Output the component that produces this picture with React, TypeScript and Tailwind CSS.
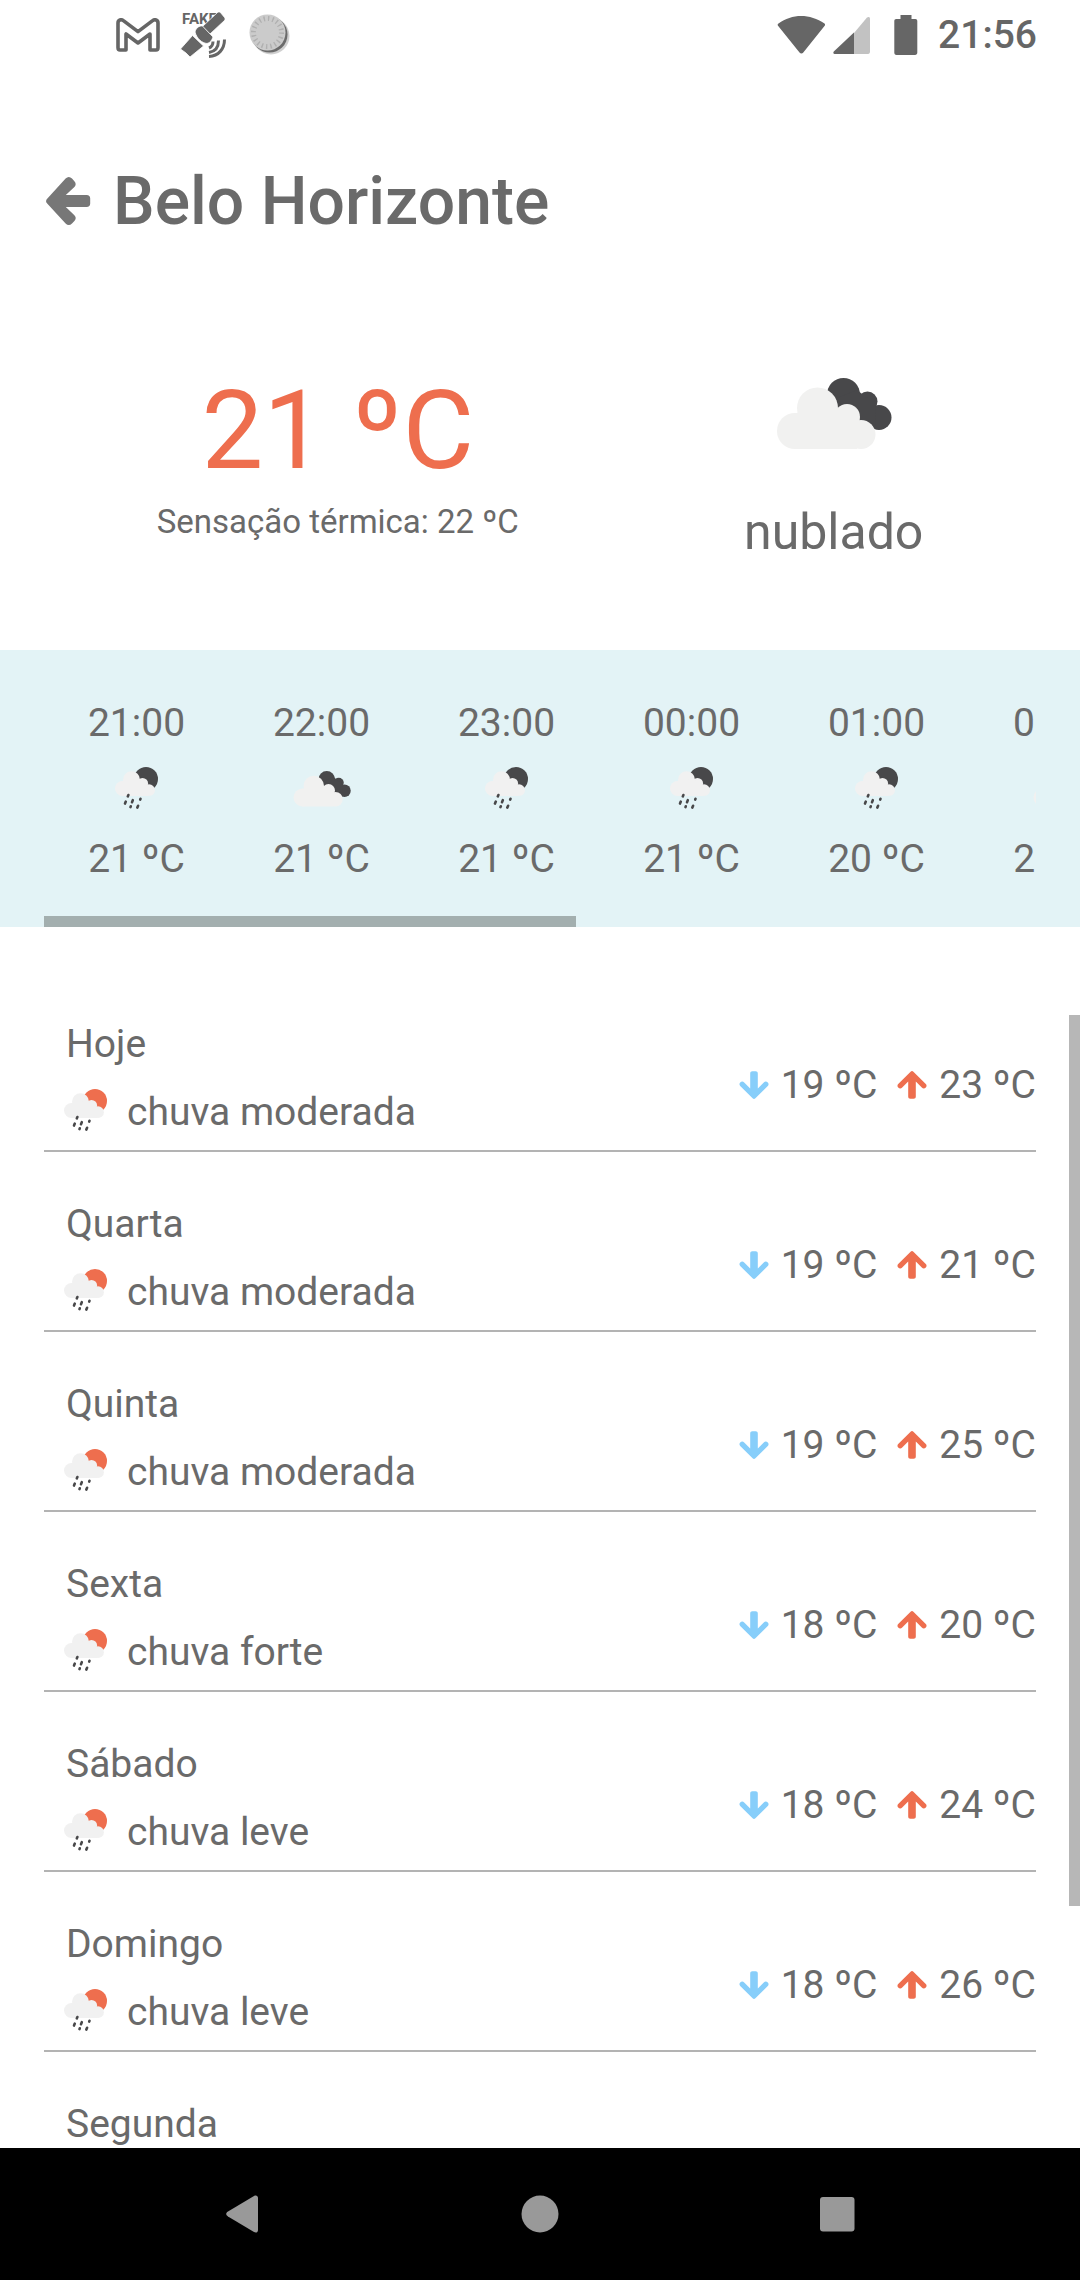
import React from "react";

type Sky = "rain" | "clouds";

const hours: { time: string; sky: Sky; temp: number }[] = [
  { time: "21:00", sky: "rain", temp: 21 },
  { time: "22:00", sky: "clouds", temp: 21 },
  { time: "23:00", sky: "rain", temp: 21 },
  { time: "00:00", sky: "rain", temp: 21 },
  { time: "01:00", sky: "rain", temp: 20 },
  { time: "02:00", sky: "clouds", temp: 20 },
];

const days = [
  { name: "Hoje", text: "chuva moderada", min: 19, max: 23 },
  { name: "Quarta", text: "chuva moderada", min: 19, max: 21 },
  { name: "Quinta", text: "chuva moderada", min: 19, max: 25 },
  { name: "Sexta", text: "chuva forte", min: 18, max: 20 },
  { name: "Sábado", text: "chuva leve", min: 18, max: 24 },
  { name: "Domingo", text: "chuva leve", min: 18, max: 26 },
  { name: "Segunda", text: "chuva leve", min: 18, max: 26 },
];

function CloudsIcon({ className }: { className: string }) {
  return (
    <svg viewBox="-1 0 116 72" className={className} aria-hidden="true">
      <g fill="#48484a">
        <circle cx="66.5" cy="16.5" r="16.5" />
        <circle cx="90.5" cy="23.5" r="10" />
        <circle cx="102" cy="39.5" r="12.5" />
        <path d="M60 20L80 12L99 27L98 51L84 50Z" />
      </g>
      <g fill="#f1f1f0">
        <circle cx="18" cy="53" r="18" />
        <circle cx="40.5" cy="30" r="20.5" />
        <circle cx="70" cy="39" r="13" />
        <circle cx="84" cy="56.5" r="14.5" />
        <path d="M18 36L22 34L60 30L80 44V71H18Z" />
      </g>
    </svg>
  );
}

function RainIcon({ disc }: { disc: string }) {
  return (
    <svg viewBox="0 0 44 44" className="h-11 w-11 shrink-0" aria-hidden="true">
      <circle cx="31" cy="12" r="12" fill={disc} />
      <g fill="#f1f1f1">
        <circle cx="7.5" cy="21.5" r="7.5" />
        <circle cx="16.5" cy="12.8" r="8.5" />
        <circle cx="27.5" cy="16.5" r="5.6" />
        <circle cx="34" cy="23.2" r="5.9" />
        <path d="M7.5 14L24 12L33 20V29H7.5Z" />
      </g>
      <g stroke="#48484a" strokeWidth="2.6" strokeLinecap="round">
        <path d="M13.4 28L12.8 29.4M10.8 34.6L10 36.6M17.8 33.2L17 35.2M25.5 31.8L25.2 32.6M15.8 39.3L15.5 40.1M23.1 38.8L22.3 40.6" />
      </g>
    </svg>
  );
}

function ArrowIcon({ className }: { className: string }) {
  return (
    <svg viewBox="0 0 30 28" className={className} aria-hidden="true">
      <path
        fill="currentColor"
        d="M13.6 0.7C14.4-.2 15.6-.2 16.4.7L28.8 13C30 14.2 29.6 15.6 28.8 16.4C27.6 17.7 26 17.7 24.8 16.5L18.8 10.6V25.6C18.8 27 18 27.8 16.6 27.8H13.4C12 27.8 11.2 27 11.2 25.6V10.6L5.2 16.5C4 17.7 2.4 17.7 1.2 16.4C.2 15.4.2 14 1.2 13Z"
      />
    </svg>
  );
}

function StatusBar() {
  return (
    <header className="flex h-[66px] shrink-0 items-center justify-between pl-[116px] pr-[43px] pt-[3px] text-[#666666]">
      <div className="flex items-center gap-5">
        <svg viewBox="0 0 44 34" className="h-[34px] w-11" aria-label="Gmail">
          <path
            d="M2 29.5V5C2 1.6 5.4 1 7.4 2.6L22 13.6L36.6 2.6C38.6 1 42 1.6 42 5V29.5C42 31 41.4 32 40 32H34V16L22 25L10 16V32H4C2.6 32 2 31 2 29.5Z"
            fill="none"
            stroke="currentColor"
            strokeWidth="3.6"
            strokeLinejoin="round"
          />
        </svg>
        <svg viewBox="0 0 48 46" className="h-[46px] w-12 overflow-visible" aria-label="Fake GPS">
          <text x="2" y="12" fontSize="15" fontWeight="700" fontFamily="Roboto, sans-serif" fill="currentColor">
            FAKE
          </text>
          <g fill="currentColor" stroke="#fff" strokeWidth="0.8">
            <path d="M38 0H40L45 6V8L30 22L22.5 14.5Z" />
            <path d="M15 20C16 16 19 13.5 22.5 14L33 25C32 28 30 31 27 31.5C22 31 17 27 15 20Z" />
            <path d="M12.5 23.5L23.5 34L10 45L6 41L.5 37Z" />
          </g>
          <path
            d="M29 36C31.5 35 33 33 33 29.5M29 40.5C35 39.5 38.5 35 38.5 28.5M29 44.5C38.5 44 44.5 37 44.5 27.5"
            fill="none"
            stroke="currentColor"
            strokeWidth="3"
          />
        </svg>
        <svg viewBox="-1 0 42 42" className="h-[42px] w-[42px]" aria-hidden="true">
          <circle cx="22" cy="22" r="18.5" fill="#777777" opacity="0.35" />
          <circle cx="20.5" cy="20.5" r="18" fill="#6b6b6b" />
          <circle cx="18.5" cy="18.5" r="18" fill="#cbcbcb" />
          <circle cx="18.5" cy="18.5" r="14" fill="none" stroke="#b0b0b0" strokeWidth="5" strokeDasharray="1.4 3" />
        </svg>
      </div>
      <div className="flex items-center">
        <svg viewBox="0 0 50 40" className="mr-1.5 h-10 w-[50px]" aria-label="Wi-Fi">
          <path d="M1.5 8.5C15-1.5 33-1.5 47.5 8.5C48.2 9 48.2 10 47.7 10.7L26.3 37.5C25.2 38.8 23.6 38.8 22.5 37.5L1 10.7C.4 10 .6 9 1.5 8.5Z" fill="currentColor" />
        </svg>
        <svg viewBox="0 0 38 40" className="mr-[23px] h-10 w-[38px]" aria-label="Sinal">
          <path d="M21 18L34 2.5C35.5 1.3 37 2 37 3.5V36.5C37 38 36.4 39 35 39H21Z" fill="#c2c2c2" />
          <path d="M21 17.5V39H1.5C.3 39 0 37.5.8 36.6Z" fill="currentColor" />
        </svg>
        <svg viewBox="0 0 24 40" className="mr-5 h-10 w-6" aria-label="Bateria">
          <path d="M6.5 0H17.5V4H21.5C22.5 4 23.3 4.8 23.3 6V37.5C23.3 39 22.5 40 21 40H2.5C1 40 .3 39 .3 37.5V6C.3 4.8 1 4 2.2 4H6.5Z" fill="currentColor" />
        </svg>
        <time className="text-[39px] font-medium leading-[52px]">21:56</time>
      </div>
    </header>
  );
}

function Hourly() {
  return (
    <section aria-label="Próximas horas" className="shrink-0 bg-[#e3f3f6] px-11">
      <div className="relative overflow-hidden pb-[42px] pl-11 pt-[47px]">
        <ul className="flex gap-[88px]">
          {hours.map((h) => (
            <li key={h.time} className="flex w-[97px] shrink-0 flex-col items-center whitespace-nowrap leading-[52px]">
              <span>{h.time}</span>
              <span className="mb-1 flex h-20 items-center justify-center">
                {h.sky === "rain" ? <RainIcon disc="#48484a" /> : <CloudsIcon className="h-9 w-[58px] shrink-0" />}
              </span>
              <span>{h.temp} ºC</span>
            </li>
          ))}
        </ul>
        <div className="absolute bottom-0 left-0 h-[11px] w-[53.6%] bg-[#a3afaf]" />
      </div>
    </section>
  );
}

function Daily() {
  return (
    <section aria-label="Próximos dias" className="relative mt-[88px] min-h-0 flex-1 overflow-hidden px-11 pt-[3px]">
      <ul className="flex flex-col gap-[46px]">
        {days.map((d) => (
          <li key={d.name} className="flex shrink-0 items-center justify-between border-b-2 border-[#b3b3b3] leading-[52px]">
            <div className="pl-5">
              <p className="pl-[2px]">{d.name}</p>
              <div className="flex items-center pb-3 pt-4">
                <span className="pb-0.5">
                  <RainIcon disc="#ee6e4e" />
                </span>
                <p className="ml-[19px]">{d.text}</p>
              </div>
            </div>
            <div className="flex items-center whitespace-nowrap pt-0.5">
              <ArrowIcon className="mr-3 h-7 w-[30px] rotate-180 text-[#87cefa]" />
              <span>{d.min} ºC</span>
              <ArrowIcon className="ml-5 mr-3 h-7 w-[30px] text-[#ee6e4e]" />
              <span>{d.max} ºC</span>
            </div>
          </li>
        ))}
      </ul>
      <div className="absolute right-0 top-0 h-[78.6%] w-[11px] bg-[#b7b7b7]" />
    </section>
  );
}

function NavBar() {
  return (
    <nav className="flex h-[132px] shrink-0 items-center justify-center gap-[257px] bg-black text-[#999999]">
      <button type="button" aria-label="Voltar" className="h-10 w-10">
        <svg viewBox="0 0 40 40" className="h-10 w-10">
          <path d="M5 17.6L31 1.9C33 .8 35 1.6 35 4V36C35 38.4 33 39.2 31 38.1L5 22.4C2.6 20.9 2.6 19.1 5 17.6Z" fill="currentColor" />
        </svg>
      </button>
      <button type="button" aria-label="Início" className="h-10 w-10">
        <svg viewBox="0 0 40 40" className="h-10 w-10">
          <circle cx="20" cy="20" r="18.5" fill="currentColor" />
        </svg>
      </button>
      <button type="button" aria-label="Recentes" className="h-10 w-10">
        <svg viewBox="0 0 40 40" className="h-10 w-10">
          <rect x="3" y="3" width="34.5" height="34.5" rx="3" fill="currentColor" />
        </svg>
      </button>
    </nav>
  );
}

export default function App() {
  return (
    <div className="flex h-screen flex-col overflow-hidden bg-white font-['Roboto',sans-serif] text-[39px] text-[#6a6a6a]">
      <StatusBar />
      <main className="flex min-h-0 flex-1 flex-col">
        <div className="flex h-[271px] shrink-0 items-center px-11">
          <button type="button" aria-label="Voltar" className="mr-[21px] flex w-12 items-center justify-center pb-0.5 text-[#777777]">
            <svg viewBox="0 0 46 50" className="h-[50px] w-[46px]" aria-hidden="true">
              <path
                fill="currentColor"
                d="M2.4 22.4L20.6 2.4C22.6.4 25 .4 27 2.4L29.4 5.2C31.2 7.2 31 9.2 29.4 11L20.8 19H41.6C44 19 45.2 20.4 45.2 22.4V27.6C45.2 29.8 44 31 41.6 31H20.8L29.4 39.2C31.2 41 31.2 43 29.4 45L27 47.6C25 49.6 22.6 49.6 20.6 47.6L2.4 27.8C.6 26 .6 24.2 2.4 22.4Z"
              />
            </svg>
          </button>
          <h1 className="text-[66px] font-medium leading-[80px]">Belo Horizonte</h1>
        </div>
        <section aria-label="Agora" className="flex shrink-0 items-start justify-around px-11 pb-[88px] pt-[22px]">
          <div className="text-center">
            <p className="text-[110px] leading-[144px] text-[#ee6e4e]">21 ºC</p>
            <p className="text-[33px] leading-[38px]">Sensação térmica: 22 ºC</p>
          </div>
          <div className="flex flex-col items-center pt-[19px]">
            <CloudsIcon className="h-[72px] w-[116px]" />
            <p className="mt-[52px] text-[50px] leading-[60px]">nublado</p>
          </div>
        </section>
        <Hourly />
        <Daily />
      </main>
      <NavBar />
    </div>
  );
}
